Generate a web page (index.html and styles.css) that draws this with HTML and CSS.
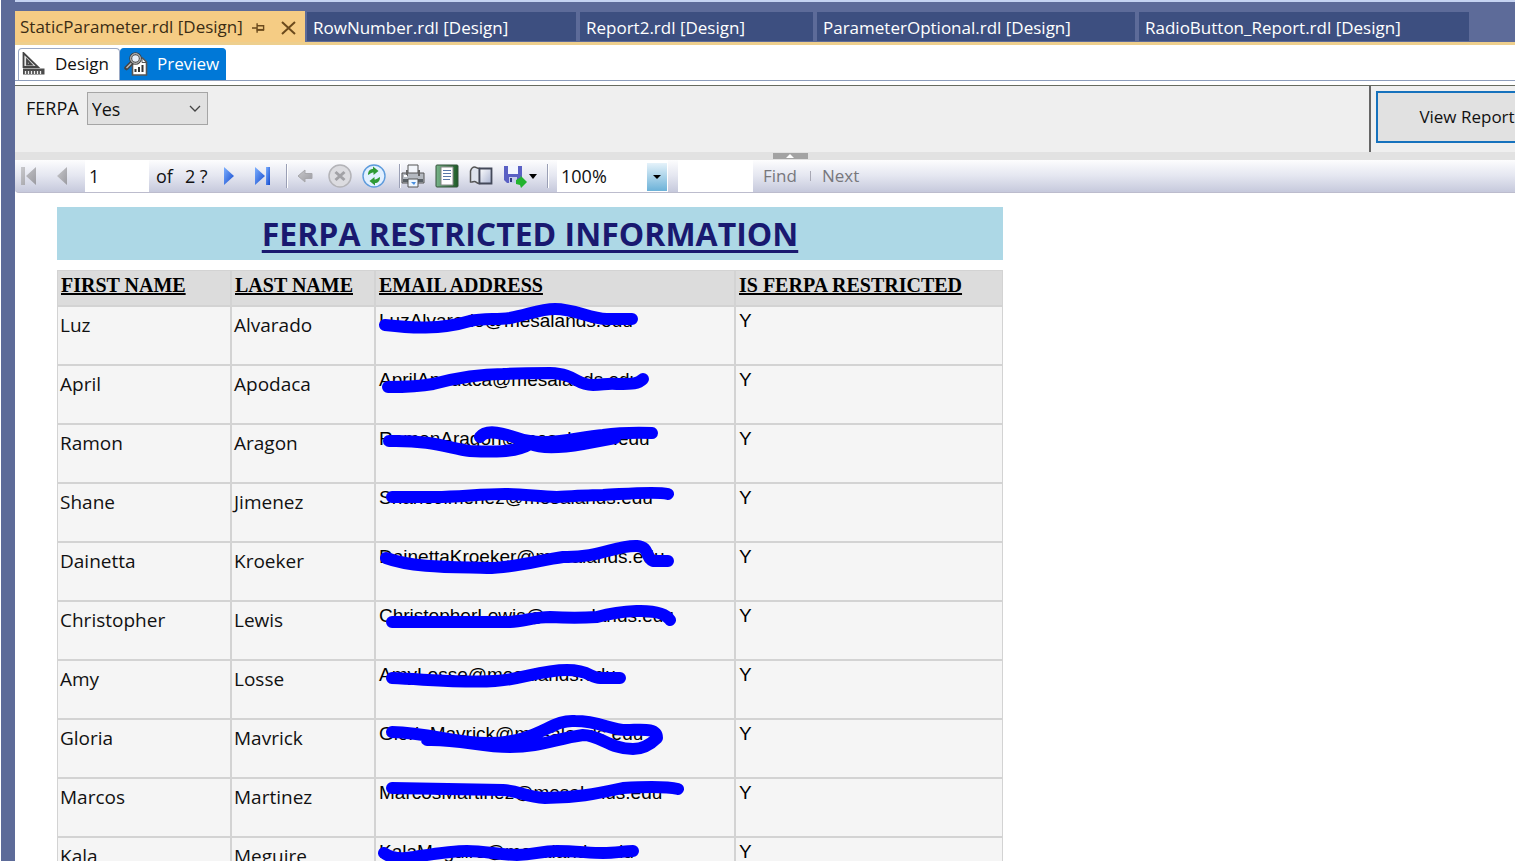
FILE: index.html
```html
<!DOCTYPE html>
<html lang="en">
<head>
<meta charset="utf-8">
<title>StaticParameter.rdl [Design]</title>
<link rel="stylesheet" href="styles.css">
</head>
<body>
<div class="window">
  <nav class="doc-tabs" aria-label="Open documents">
    <div class="doc-tab active">
      <a href="#static">StaticParameter.rdl [Design]</a>
      <button class="tab-btn" type="button" aria-label="Pin"><svg width="13" height="12" viewBox="0 0 14 12"><path d="M0 6h5M5.500 1v10M5 3.500h7.500v5M5 8h8" fill="none" stroke="#6b4a1c" stroke-width="1.500"/><path d="M5 7h8v2H5z" fill="#6b4a1c"/></svg></button>
      <button class="tab-btn close" type="button" aria-label="Close"><svg width="15" height="14" viewBox="0 0 15 14"><path d="M1 1l13 12M14 1L1 13" stroke="#6b4a1c" stroke-width="2"/></svg></button>
    </div>
    <div class="doc-tab t2"><a href="#row">RowNumber.rdl [Design]</a></div>
    <div class="doc-tab t3"><a href="#rep">Report2.rdl [Design]</a></div>
    <div class="doc-tab t4"><a href="#opt">ParameterOptional.rdl [Design]</a></div>
    <div class="doc-tab t5"><a href="#radio">RadioButton_Report.rdl [Design]</a></div>
  </nav>

  <div class="view-tabs">
    <button type="button" class="view-tab design"><svg width="24" height="24" viewBox="0 0 24 24"><path d="M1.500 1v14h14.500zM5 8l4.500 4.500H5z" fill="#e4e4e4" fill-rule="evenodd" stroke="#444" stroke-width="1.800"/><path d="M1 16.500h21.500v6H1z" fill="#4c4c4c"/><path d="M3.500 22v-3M6.500 22v-3M9.500 22v-3M12.500 22v-3M15.500 22v-3M18.500 22v-3" stroke="#eee" stroke-width="1.300"/></svg>Design</button>
    <button type="button" class="view-tab preview"><svg width="24" height="24" viewBox="0 0 24 24"><path d="M8.500 6h10l4 4v13h-14z" fill="#fff" stroke="#555" stroke-width="1.600"/><path d="M18 6v4.500h4" fill="none" stroke="#555"/><path d="M11.500 20v-3M15 20v-5M18.500 20v-7" stroke="#333" stroke-width="2"/><path d="M2.500 16L8 10.500" stroke="#444" stroke-width="4.500" stroke-linecap="round"/><path d="M2.500 16L7.500 11" stroke="#bbb" stroke-width="1.500"/><circle cx="11.500" cy="6.500" r="4.800" fill="#e6eef8" stroke="#444" stroke-width="3"/><circle cx="11.500" cy="6.500" r="4.800" fill="none" stroke="#ddd"/></svg>Preview</button>
  </div>

  <form class="params">
    <div class="param-fields">
      <label for="ferpa">FERPA</label>
      <span class="select-wrap"><select id="ferpa"><option>Yes</option><option>No</option></select><svg width="12" height="8" viewBox="0 0 12 8"><path d="M1 1l5 5 5-5" fill="none" stroke="#444" stroke-width="1.300"/></svg></span>
    </div>
    <div class="param-action"><button type="button" class="view-report">View Report</button></div>
  </form>
  <div class="splitter"><button type="button" aria-label="Collapse parameters"><svg width="8" height="4" viewBox="0 0 8 4"><path d="M4 0l4 4H0z" fill="#fff"/></svg></button></div>

  <div class="toolbar">
    <svg width="0" height="0" class="defs"><defs>
      <linearGradient id="blue" x1="0" x2="1" y1="0" y2="1"><stop offset="0" stop-color="#7db0ff"/><stop offset="1" stop-color="#1248cc"/></linearGradient>
      <linearGradient id="grey" x1="0" x2="1" y1="0" y2="1"><stop offset="0" stop-color="#c9c9cc"/><stop offset="1" stop-color="#9a9aa0"/></linearGradient>
      <linearGradient id="page" x1="0" x2="1" y1="0" y2="1"><stop offset="0" stop-color="#fff"/><stop offset="1" stop-color="#a9b3d0"/></linearGradient>
      <linearGradient id="green" x1="0" x2="1" y1="0" y2="0"><stop offset="0" stop-color="#79b58b"/><stop offset="1" stop-color="#1d5a25"/></linearGradient>
    </defs></svg>
    <div class="group pager">
      <button type="button" aria-label="First page"><svg width="18" height="20" viewBox="0 0 18 20"><path d="M1 1h4v18H1zM16 1v18L6 10z" fill="url(#grey)"/></svg></button>
      <button type="button" aria-label="Previous page"><svg width="12" height="20" viewBox="0 0 12 20"><path d="M11 1v18L1 10z" fill="url(#grey)"/></svg></button>
      <input class="page-no" type="text" value="1" aria-label="Page">
      <span class="of">of</span><span class="total">2 ?</span>
      <button type="button" aria-label="Next page"><svg width="12" height="20" viewBox="0 0 12 20"><path d="M1 1v18l10-9z" fill="url(#blue)"/></svg></button>
      <button type="button" aria-label="Last page"><svg width="18" height="20" viewBox="0 0 18 20"><path d="M2 1v18l10-9z" fill="url(#blue)"/><path d="M13 1h4v18h-4z" fill="url(#blue)"/></svg></button>
    </div>
    <span class="sep"></span>
    <div class="group nav">
      <button type="button" aria-label="Back"><svg width="24" height="24" viewBox="0 0 24 24"><path d="M4 12l7-6v3.500h7v5h-7V18z" fill="url(#grey)" stroke="#a8a8ac"/></svg></button>
      <button type="button" aria-label="Stop"><svg width="24" height="24" viewBox="0 0 24 24"><circle cx="12" cy="12" r="11" fill="#dcdce0" stroke="#b4b4b8" stroke-width="1.500"/><path d="M7.500 8l9 8M16.500 8l-9 8" stroke="#a2a2a6" stroke-width="3"/></svg></button>
      <button type="button" aria-label="Refresh"><svg width="24" height="24" viewBox="0 0 24 24"><circle cx="12" cy="12" r="11" fill="#e2f0ff" stroke="#5d9bdc" stroke-width="1.400"/><path d="M6 11c0-4 2-6 5-6V2.500l5.500 4.500-5 4V8.500C9 8.500 9 9.500 6 11z" fill="#2f9a34"/><path d="M18 13c0 4-2 6-5 6v2.500L7.500 17l5-4v2.500c2.500 0 2.500-1 5.500-2.500z" fill="#2f9a34"/></svg></button>
    </div>
    <span class="sep"></span>
    <div class="group output">
      <button type="button" aria-label="Print"><svg width="24" height="24" viewBox="0 0 24 24"><path d="M7 1h10v9H7z" fill="#f3f6fb" stroke="#555"/><path d="M1 9h22v10H1z" fill="#b4b9c0" stroke="#555"/><path d="M5 6h2v6H5zM17 6h2v6h-2z" fill="#666"/><path d="M2 15h20v3H2z" fill="#596066"/><path d="M3 12h3" stroke="#fff" stroke-width="2"/><path d="M7 15h10v8H7z" fill="#eef6ff" stroke="#555"/><path d="M10 18h5l-2 3z" fill="#4a8fe0"/></svg></button>
      <button type="button" aria-label="Print layout"><svg width="24" height="24" viewBox="0 0 24 24"><rect x="1" y="1" width="22" height="22" rx="1" fill="url(#green)" stroke="#35523b"/><path d="M6 3h12v18H6z" fill="#fff" stroke="#888"/><path d="M8 6.500h8M8 9.500h8M8 12.500h8M8 15.500h7" stroke="#5876a8" stroke-width="1.200"/></svg></button>
      <button type="button" aria-label="Page setup"><svg width="24" height="24" viewBox="0 0 24 24"><path d="M1.500 18V7c1-3 3-4 4-4 2 0 2 1.500 5 1.500v15c-3 0-3-2-5-2-1 0-3 1-4 .5z" fill="#dfe4ee" stroke="#555" stroke-width="1.500"/><path d="M10.500 4.500h12v15h-12z" fill="url(#page)" stroke="#44495a" stroke-width="1.800"/></svg></button>
      <button type="button" class="export" aria-label="Export"><svg width="24" height="24" viewBox="0 0 24 24"><path d="M1 2h18v17H4l-3-3z" fill="#5a60c4"/><path d="M5 2h10v8H5z" fill="#f3f6ff"/><path d="M6 13h8v6H6z" fill="#c6cdec"/><path d="M7 14h2v4H7z" fill="#333a80"/><path d="M13 16l5-3-1-2 6 6 1 1-6 6-1-3-4-1z" fill="#22b32e"/></svg><svg width="8" height="5" viewBox="0 0 8 5"><path d="M0 0h8L4 5z"/></svg></button>
    </div>
    <span class="sep"></span>
    <span class="zoom"><select aria-label="Zoom"><option>100%</option></select><svg width="20" height="28" viewBox="0 0 20 28"><path d="M6 12h8l-4 4z"/></svg></span>
    <input class="search" type="text" aria-label="Find text">
    <button type="button" class="text-btn">Find</button>
    <span class="mini-sep"></span>
    <button type="button" class="text-btn">Next</button>
  </div>

  <main class="report">
    <h1>FERPA RESTRICTED INFORMATION</h1>
    <table>
      <colgroup><col class="c1"><col class="c2"><col class="c3"><col class="c4"></colgroup>
      <thead><tr><th>FIRST NAME</th><th>LAST NAME</th><th>EMAIL ADDRESS</th><th>IS FERPA RESTRICTED</th></tr></thead>
      <tbody>
        <tr><td>Luz</td><td>Alvarado</td><td class="plain">LuzAlvarado@mesalands.edu<svg class="ink" viewBox="0 0 360 58"><path d="M10 19C35 22 65 24 95 15C110 12 120 14 135 12C155 8 165 3 180 3C200 3 215 13 232 13L257 13"/></svg></td><td class="plain">Y</td></tr>
        <tr><td>April</td><td>Apodaca</td><td class="plain">AprilApodaca@mesalands.edu<svg class="ink" viewBox="0 0 360 58"><path d="M13 22C30 22 42 22 58 19C85 12 105 9 128 9C145 8 160 8 175 8C202 9 200 20 218 20C228 20 232 18 242 19C258 19 263 19 268 14"/></svg></td><td class="plain">Y</td></tr>
        <tr><td>Ramon</td><td>Aragon</td><td class="plain">RamonAragon@mesalands.edu<svg class="ink" viewBox="0 0 360 58"><path d="M14 17C60 16 75 25 95 27C115 28 140 29 155 20C165 24 185 24 208 20L240 14"/><path d="M105 13C112 4 130 10 142 14C170 24 200 13 228 11Q250 8 277 9"/></svg></td><td class="plain">Y</td></tr>
        <tr><td>Shane</td><td>Jimenez</td><td class="plain">ShaneJimenez@mesalands.edu<svg class="ink" viewBox="0 0 360 58"><path d="M17 14H60C85 14 105 11 130 11C150 11 165 14 182 14C200 13 215 12 228 12C250 11 280 8 293 11"/></svg></td><td class="plain">Y</td></tr>
        <tr><td>Dainetta</td><td>Kroeker</td><td class="plain">DainettaKroeker@mesalands.edu<svg class="ink" viewBox="0 0 360 58"><path d="M11 16C38 26 80 25 112 26C140 26 165 18 188 15C225 16 240 3 262 4C275 5 270 15 278 19H293"/></svg></td><td class="plain">Y</td></tr>
        <tr><td>Christopher</td><td>Lewis</td><td class="plain">ChristopherLewis@mesalands.edu<svg class="ink" viewBox="0 0 360 58"><path d="M17 21H135C150 20 160 16 175 16C195 17 205 17 222 16C240 11 285 4 295 19"/></svg></td><td class="plain">Y</td></tr>
        <tr><td>Amy</td><td>Losse</td><td class="plain">AmyLosse@mesalands.edu<svg class="ink" viewBox="0 0 360 58"><path d="M17 18C60 20 90 23 120 21C145 20 165 10 192 10C215 10 215 18 225 18H245"/></svg></td><td class="plain">Y</td></tr>
        <tr><td>Gloria</td><td>Mavrick</td><td class="plain">GloriaMavrick@mesalands.edu<svg class="ink" viewBox="0 0 360 58"><path d="M17 13C55 14 80 24 112 24C165 24 175 0 200 2C225 2 235 11 252 11C265 11 282 8 282 19C275 26 268 30 258 30C235 30 225 16 208 16C180 20 165 28 135 28C105 28 85 20 52 21"/></svg></td><td class="plain">Y</td></tr>
        <tr><td>Marcos</td><td>Martinez</td><td class="plain">MarcosMartinez@mesalands.edu<svg class="ink" viewBox="0 0 360 58"><path d="M17 10L128 12C145 13 150 19 170 20C200 20 220 16 248 10C265 9 290 8 303 11"/></svg></td><td class="plain">Y</td></tr>
        <tr><td>Kala</td><td>Meguire</td><td class="plain">KalaMeguire@mesalands.edu<svg class="ink" viewBox="0 0 360 58"><path d="M9 16C20 24 35 21 45 19C65 16 80 14 92 14C110 14 125 18 142 18C160 18 165 14 182 14C200 14 215 16 228 16C240 16 250 14 258 14"/></svg></td><td class="plain">Y</td></tr>
      </tbody>
    </table>
  </main>
</div>
</body>
</html>
```
FILE: styles.css
```css
* { box-sizing: border-box; }
body { margin: 0; height: 100vh; padding: 0 0 3px 1px; overflow: hidden; background: #fff; color: #111; font: 18px/26px "Open Sans", sans-serif; }
button, input, select { font: inherit; color: inherit; margin: 0; padding: 0; border: 0; background: none; border-radius: 0; }
svg { display: block; flex: none; }
.window { height: 100%; overflow: hidden; display: flex; flex-direction: column; border-left: 14px solid #5d6b99; background: #fff; }
.window > * { flex: none; }

.doc-tabs { display: flex; align-items: flex-end; height: 45px; margin-left: -14px; padding-left: 13px; gap: 4px; border-top: 2px solid #c5d3f1; border-bottom: 3px solid #eecf8d; background: #5d6b99; white-space: nowrap; }
.doc-tab { height: 29px; margin-bottom: 1px; padding-left: 6px; background: #3d4f80; color: #fff; line-height: 31px; font-size: 17px; }
.doc-tab a { color: inherit; text-decoration: none; }
.doc-tab.active { display: flex; align-items: center; width: 291px; height: 31px; margin: 0 -2px 0 0; padding-right: 9px; background: #f5cc84; color: #3b2c14; }
.doc-tab.active a { flex: 1; line-height: 34px; }
.tab-btn { margin-top: 3px; }
.close { margin-left: 16px; }
.t2 { width: 269px; }
.t3 { width: 233px; }
.t4 { width: 318px; }
.t5 { width: 330px; }

.view-tabs { display: flex; align-items: flex-end; height: 36px; padding-left: 3px; border-bottom: 1px solid #8d9dbb; }
.view-tab { display: flex; align-items: center; gap: 9px; height: 32px; padding: 0 8px 2px 3px; border: 1px solid #9aa8c4; border-bottom: 0; border-radius: 4px 4px 0 0; font-size: 17px; }
.design { width: 102px; background: #fff; }
.preview { width: 106px; background: #0078d7; border-color: #0078d7; color: #fff; }

.params { display: flex; height: 67px; margin-top: 4px; border-top: 1px solid #676b60; background: #efefef; overflow: hidden; }
.param-fields { flex: 1; display: flex; align-items: flex-start; gap: 8px; padding: 6px 11px; border-right: 2px solid #666; }
.param-fields label { line-height: 33px; }
.select-wrap { position: relative; }
.select-wrap select { display: block; width: 121px; height: 33px; padding-left: 4px; border: 1px solid #a5a5a5; background: #e1e1e1; appearance: none; }
.select-wrap svg { position: absolute; right: 7px; top: 13px; pointer-events: none; }
.param-action { flex: none; width: 144px; padding: 5px 0 0 5px; }
.view-report { width: 182px; height: 52px; border: 2px solid #1672bd; background: #e1e1e1; font-size: 17px; }

.splitter { display: flex; justify-content: center; align-items: flex-end; height: 8px; padding: 0 0 1px 50px; background: #e2e2e2; }
.splitter button { display: flex; justify-content: center; align-items: center; width: 35px; height: 6px; background: #a3a3a3; }

.toolbar { display: flex; align-items: center; height: 33px; border-bottom: 1px solid #bcbccd; border-radius: 0 0 0 4px; background: linear-gradient(#fdfdfe, #e4e6f0 50%, #c6c9dc); }
.defs { position: absolute; }
.group { display: flex; align-items: center; }
.pager { width: 271px; padding-left: 5px; }
.pager button + button { margin-left: 18px; }
.page-no { width: 64px; height: 32px; margin-left: 17px; padding-left: 4px; background: #fff; }
.of { margin: 0 12px 0 7px; }
.total { margin-right: 15px; }
.sep { width: 2px; height: 24px; border-left: 1px solid #9a9fb5; border-right: 1px solid #fff; }
.nav { gap: 10px; padding: 0 13px 0 6px; }
.output { gap: 10px; padding: 0 10px 0 0; }
.export { display: flex; align-items: center; gap: 2px; }
.zoom { position: relative; width: 111px; height: 32px; margin-left: 8px; }
.zoom select { display: block; width: 100%; height: 32px; padding-left: 4px; background: #fff; appearance: none; }
.zoom svg { position: absolute; right: 1px; top: 3px; pointer-events: none; background: linear-gradient(#e5f2fa, #6cb2d8); }
.search { width: 75px; height: 32px; margin: 0 10px; background: #fff; }
.text-btn { color: #77777c; font-size: 17px; }
.mini-sep { width: 1px; height: 10px; margin: 0 11px 0 13px; background: #a8a8b4; }

.report { padding: 14px 42px 0; }
h1 { width: 100%; max-width: 946px; height: 53px; margin: 0 0 10px; background: #add8e6; color: #191970; font-size: 32px; line-height: 53px; text-align: center; text-decoration: underline; text-decoration-thickness: 3px; text-underline-offset: 4px; }
table { width: 100%; max-width: 946px; table-layout: fixed; border-collapse: separate; border-spacing: 0; }
.c1 { width: 174px; }
.c2 { width: 144px; }
.c3 { width: 360px; }
th { height: 36px; padding: 3px 3px 0; border: 1px solid #d3d3d3; background: #dcdcdc; color: #000; font: bold 20px/22px "Liberation Serif", serif; text-align: left; vertical-align: top; text-decoration: underline; }
td { position: relative; height: 59px; padding: 5px 2px 0; border: 1px solid #d3d3d3; background: #f5f5f5; vertical-align: top; font-size: 19px; }
td.plain { padding: 2px 3px 0; color: #000; font: 19px/24px "Liberation Sans", sans-serif; }
.ink { position: absolute; left: -1px; top: -1px; width: 360px; height: 58px; overflow: visible; z-index: 1; fill: none; stroke: #00f; stroke-width: 12; stroke-linecap: round; stroke-linejoin: round; }
```
